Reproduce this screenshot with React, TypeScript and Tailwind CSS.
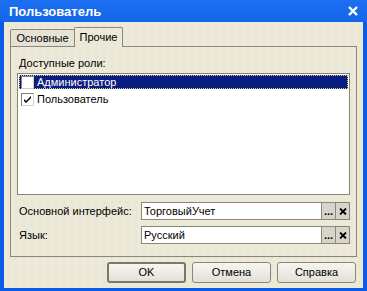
import React from "react";

const dots = "bg-[#ECE9D8] bg-[radial-gradient(circle,#d9d5c4_0.6px,transparent_0.8px)] bg-[length:8px_8px]";

function Checkbox({ checked }: { checked?: boolean }) {
  return (
    <div className="w-[13px] h-[13px] bg-white border flex items-center justify-center shrink-0 border-t-[#808080] border-l-[#808080] border-r-[#D4D0C8] border-b-[#D4D0C8]">
      {checked && (
        <svg width="9" height="9" viewBox="0 0 9 9">
          <path d="M1 4 L3 6 L8 1 L8 3 L3 8 L1 6 Z" fill="#000" />
        </svg>
      )}
    </div>
  );
}

function Field({ label, value }: { label: string; value: string }) {
  return (
    <div className="flex items-center h-[18px]">
      <div className="w-[122px] text-[11px] text-black whitespace-nowrap">{label}</div>
      <div className="flex h-[18px] border border-[#8a8778]">
        <div className="w-[179px] bg-white text-[11px] text-black pl-[2px] leading-[16px] whitespace-nowrap">{value}</div>
        <div className="w-[14px] bg-[#D8D4CA] border-l border-[#8a8778] text-[11px] font-bold text-black flex items-end justify-center leading-[12px] pb-[2px]">...</div>
        <div className="w-[14px] bg-[#D8D4CA] border-l border-[#8a8778] flex items-center justify-center">
          <svg width="8" height="7" viewBox="0 0 8 7">
            <path d="M1 0.5 L7 6.5 M7 0.5 L1 6.5" stroke="#000" strokeWidth="1.8" />
          </svg>
        </div>
      </div>
    </div>
  );
}

function Btn({ label, def }: { label: string; def?: boolean }) {
  return (
    <div
      className={
        "w-[79px] h-[21px] rounded-[3px] flex items-center justify-center text-[11px] text-black bg-[linear-gradient(#F6F5F0,#E3E1D7)] whitespace-nowrap " +
        (def ? "border-2 border-[#7a776c]" : "border border-[#8a8778]")
      }
    >
      {label}
    </div>
  );
}

export default function App() {
  return (
    <div className="w-[367px] h-[291px] bg-[#0A5CE8] flex flex-col font-['Liberation_Sans',Arial,sans-serif] overflow-hidden">
      <div className="h-[22px] flex items-center justify-between pl-[9px] pr-[9px] bg-[linear-gradient(#1A70F0,#1665E8)]">
        <span className="text-white font-bold text-[13px] leading-none">Пользователь</span>
        <svg width="10" height="10" viewBox="0 0 10 10">
          <path d="M1 1 L9 9 M9 1 L1 9" stroke="#fff" strokeWidth="2.4" />
        </svg>
      </div>
      <div className={"mx-[4px] h-[266px] flex flex-col px-[6px] " + dots}>
        <div className="flex items-end h-[24px]">
          <div className="h-[17px] w-[65px] border border-b-0 border-[#8a8778] bg-[#E6E2D6] text-[11px] flex items-center justify-center rounded-t-[2px] -mr-[1px] whitespace-nowrap">
            Основные
          </div>
          <div className="h-[20px] w-[49px] border border-b-0 border-[#8a8778] bg-[#ECE9D8] text-[11px] flex items-center justify-center rounded-t-[2px] relative z-10 -mb-[1px] pb-[1px] whitespace-nowrap">
            Прочие
          </div>
        </div>
        <div className="w-[347px] h-[211px] border border-[#8a8778] px-[6px] pt-[9px] flex flex-col">
          <div className="text-[11px] text-black pl-[2px] leading-[14px] whitespace-nowrap">Доступные роли:</div>
          <div className="mt-[3px] w-[333px] h-[122px] bg-white border border-[#8a8778] p-[1px]">
            <div className="h-[14px] bg-[#0A1E80] outline-1 outline-dotted outline-[#D8D080] -outline-offset-1 flex items-center pl-[2px] gap-[3px]">
              <Checkbox />
              <span className="text-white text-[11px] leading-none whitespace-nowrap">Администратор</span>
            </div>
            <div className="h-[16px] flex items-center pl-[2px] gap-[3px] mt-[2px]">
              <Checkbox checked />
              <span className="text-black text-[11px] leading-none whitespace-nowrap">Пользователь</span>
            </div>
          </div>
          <div className="mt-[7px] flex flex-col gap-[6px] pl-[2px]">
            <Field label="Основной интерфейс:" value="ТорговыйУчет" />
            <Field label="Язык:" value="Русский" />
          </div>
        </div>
        <div className="flex justify-end gap-[6px] mt-[5px] pr-[1px]">
          <Btn label="OK" def />
          <Btn label="Отмена" />
          <Btn label="Справка" />
        </div>
      </div>
    </div>
  );
}
